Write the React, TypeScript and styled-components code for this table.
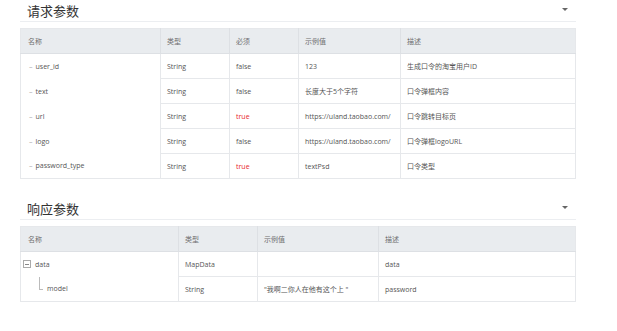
import React from "react";
import styled, { createGlobalStyle } from "styled-components";

const Global = createGlobalStyle`
  html, body { margin: 0; padding: 0; background: #fff; }
  body { font-family: "Open Sans", "Noto Sans CJK SC", sans-serif; }
`;

const Page = styled.div`
  width: 556px;
  padding: 0 0 0 20px;
  display: flex;
  flex-direction: column;
`;

const Section = styled.section<{ $top: number }>`
  margin-top: ${(p) => p.$top}px;
  display: flex;
  flex-direction: column;
`;

const Head = styled.div`
  height: 22px;
  box-sizing: border-box;
  border-bottom: 1px solid #eceef1;
  display: flex;
  align-items: center;
  justify-content: space-between;
  padding: 0 8px 0 7px;
`;

const Title = styled.h2`
  margin: 0;
  font-family: "Noto Sans CJK SC", sans-serif;
  font-weight: 400;
  font-size: 13px;
  line-height: 16px;
  color: #333;
`;

const Caret = styled.span`
  width: 0;
  height: 0;
  border-left: 3px solid transparent;
  border-right: 3px solid transparent;
  border-top: 3px solid #666;
  margin-top: -2px;
`;

const Table = styled.table`
  margin-top: 6px;
  width: 556px;
  border-collapse: collapse;
  table-layout: fixed;
  border: 1px solid #e6e8eb;
  font-size: 7px;
  color: #555;
`;

const Th = styled.th<{ $w?: number }>`
  width: ${(p) => (p.$w ? `${p.$w}px` : "auto")};
  height: 25px;
  box-sizing: border-box;
  background: #e9ecef;
  font-weight: 400;
  text-align: left;
  color: #6f6f6f;
  padding: 0 6px;
  border-right: 1px solid #dde0e4;
  border-bottom: 1px solid #dde0e4;
  &:first-child { padding-left: 7px; }
  &:last-child { border-right: none; }
`;

const Td = styled.td<{ $red?: boolean }>`
  height: 25px;
  box-sizing: border-box;
  padding: 0 6px;
  color: ${(p) => (p.$red ? "#e8262d" : "#555")};
  border-right: 1px solid #e6e8eb;
  border-bottom: 1px solid #e6e8eb;
  white-space: nowrap;
  overflow: hidden;
  &:last-child { border-right: none; }
`;

const NameTd = styled(Td)`
  border-bottom: none;
  padding-left: 8px;
`;

const Dash = styled.span`
  color: #aaa;
  margin-right: 3px;
`;

const NameWrap = styled.div`
  height: 24px;
  display: flex;
  align-items: center;
`;

const Toggle = styled.span`
  width: 6px;
  height: 6px;
  border: 1px solid #aaa;
  display: inline-flex;
  align-items: center;
  justify-content: center;
  margin-left: -6px;
  margin-right: 4px;
  &::after {
    content: "";
    width: 4px;
    height: 1px;
    background: #888;
  }
`;

const Elbow = styled.span`
  align-self: flex-start;
  width: 3px;
  height: 12px;
  margin-left: 10px;
  margin-right: 4px;
  border-left: 1px solid #bbb;
  border-bottom: 1px solid #bbb;
`;

type Req = { name: string; type: string; req: boolean; ex: string; desc: string };

const reqRows: Req[] = [
  { name: "user_id", type: "String", req: false, ex: "123", desc: "生成口令的淘宝用户ID" },
  { name: "text", type: "String", req: false, ex: "长度大于5个字符", desc: "口令弹框内容" },
  { name: "url", type: "String", req: true, ex: "https://uland.taobao.com/", desc: "口令跳转目标页" },
  { name: "logo", type: "String", req: false, ex: "https://uland.taobao.com/", desc: "口令弹框logoURL" },
  { name: "password_type", type: "String", req: true, ex: "textPsd", desc: "口令类型" },
];

export default function App() {
  return (
    <Page>
      <Global />
      <Section $top={0}>
        <Head>
          <Title>请求参数</Title>
          <Caret />
        </Head>
        <Table>
          <thead>
            <tr>
              <Th $w={140}>名称</Th>
              <Th $w={69}>类型</Th>
              <Th $w={69}>必须</Th>
              <Th $w={102}>示例值</Th>
              <Th>描述</Th>
            </tr>
          </thead>
          <tbody>
            {reqRows.map((r) => (
              <tr key={r.name}>
                <NameTd>
                  <Dash>–</Dash>
                  {r.name}
                </NameTd>
                <Td>{r.type}</Td>
                <Td $red={r.req}>{r.req ? "true" : "false"}</Td>
                <Td>{r.ex}</Td>
                <Td>{r.desc}</Td>
              </tr>
            ))}
          </tbody>
        </Table>
      </Section>
      <Section $top={19}>
        <Head>
          <Title>响应参数</Title>
          <Caret />
        </Head>
        <Table>
          <thead>
            <tr>
              <Th $w={158}>名称</Th>
              <Th $w={79}>类型</Th>
              <Th $w={121}>示例值</Th>
              <Th>描述</Th>
            </tr>
          </thead>
          <tbody>
            <tr>
              <NameTd>
                <NameWrap>
                  <Toggle />
                  data
                </NameWrap>
              </NameTd>
              <Td>MapData</Td>
              <Td></Td>
              <Td>data</Td>
            </tr>
            <tr>
              <NameTd>
                <NameWrap>
                  <Elbow />
                  model
                </NameWrap>
              </NameTd>
              <Td>String</Td>
              <Td>"我啊二你人在他有这个上 "</Td>
              <Td>password</Td>
            </tr>
          </tbody>
        </Table>
      </Section>
    </Page>
  );
}
